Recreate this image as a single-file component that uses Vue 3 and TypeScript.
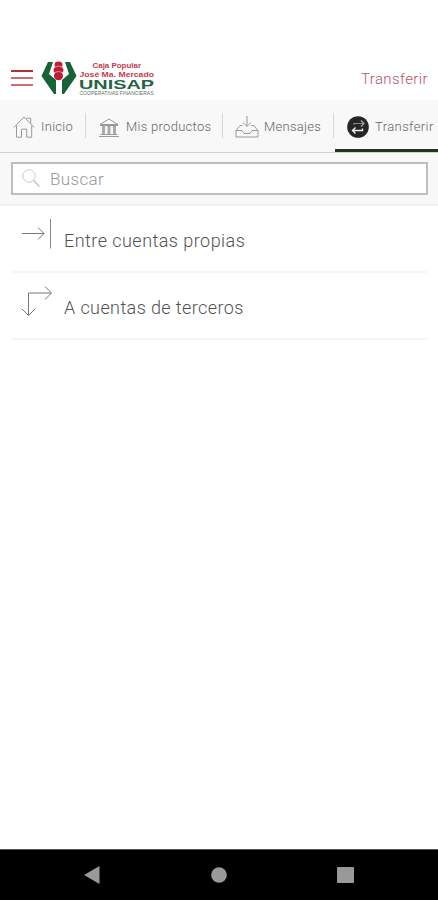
<script setup lang="ts">
import { ref } from 'vue'

interface Tab {
  id: string
  label: string
}

const tabs: Tab[] = [
  { id: 'inicio', label: 'Inicio' },
  { id: 'productos', label: 'Mis productos' },
  { id: 'mensajes', label: 'Mensajes' },
  { id: 'transferir', label: 'Transferir' },
]
const active = ref('transferir')
const query = ref('')
</script>

<template>
  <div class="screen">
    <header class="header">
      <button class="menu" aria-label="Menú"><i></i><i></i><i></i></button>
      <svg class="logo" width="116" height="42" viewBox="0 0 116 42">
        <path d="M7 4h5L8 16l7 6v14h-2L.5 18z" fill="#176336" />
        <path d="M29 4h-5l4 12-7 6v14h2l12.500-18z" fill="#176336" />
        <ellipse cx="17.500" cy="6.800" rx="4" ry="3.300" fill="#bd1e37" />
        <ellipse cx="17.500" cy="12" rx="5" ry="3.800" fill="#bd1e37" />
        <ellipse cx="17.500" cy="18" rx="4.600" ry="4.200" fill="#bd1e37" />
        <path d="M14 9q3.500-2 7 0M13.500 14.500q4-2 8 0" stroke="#e9a4ad" stroke-width=".8" fill="none" />
        <text class="brand red" x="51.500" y="9.700" font-size="7" textLength="48.500" lengthAdjust="spacingAndGlyphs">Caja Popular</text>
        <text class="brand red" x="38.500" y="18.500" font-size="7.500" textLength="74.500" lengthAdjust="spacingAndGlyphs">José Ma. Mercado</text>
        <text class="brand green" x="38" y="30.500" font-size="12.500" textLength="75" lengthAdjust="spacingAndGlyphs">UNISAP</text>
        <text class="brand small" x="38.500" y="37" font-size="5.500" textLength="74" lengthAdjust="spacingAndGlyphs">COOPERATIVAS FINANCIERAS</text>
      </svg>
      <span class="title">Transferir</span>
    </header>

    <nav class="tabs">
      <button
        v-for="tab in tabs"
        :key="tab.id"
        class="tab"
        :class="[tab.id, { active: active === tab.id }]"
        @click="active = tab.id"
      >
        <svg v-if="tab.id === 'inicio'" class="line" width="22" height="22" viewBox="0 0 22 22">
          <path d="M.8 11.500 11 1l10.200 10.500M3.500 9.500v11.700h5v-8h5.200v8h5V9.500M13.500 2.200h4.200v5.500" />
        </svg>
        <svg v-else-if="tab.id === 'productos'" class="line" width="22" height="22" viewBox="0 0 22 22">
          <path d="M2 8.500 11 3l9 5.500zM2 9.500h18M2.500 18.500h17M1 20.500h20" />
          <path class="columns" d="M5.500 10v8.500M11 10v8.500M16.500 10v8.500" />
        </svg>
        <svg v-else-if="tab.id === 'mensajes'" class="line" width="24" height="22" viewBox="0 0 24 22">
          <path d="M12 0v10M8 6.500l4 4 4-4M7.500 9.500H5l-4 5V21h22v-6.500l-4-5h-2.500M1 14.500h6l2 3h6l2-3h6" />
        </svg>
        <svg v-else width="22" height="22" viewBox="0 0 22 22">
          <circle cx="11" cy="11" r="10.800" fill="#252525" />
          <path d="M7 9V7.500h9.500" fill="none" stroke="#888" stroke-width="1.200" />
          <path d="M14 4.500l3 3-3 3" fill="none" stroke="#aaa" stroke-width="1.200" />
          <path d="M15.500 12.500v2H5.500M8.500 11.500l-3 3 3 3" fill="none" stroke="#eee" stroke-width="1.400" />
        </svg>
        <span>{{ tab.label }}</span>
      </button>
    </nav>

    <section class="search">
      <label class="field">
        <svg width="20" height="20" viewBox="0 0 20 20">
          <path d="M11.500 11.500l6 6" stroke="#bfc1c2" stroke-width="1.400" />
          <circle cx="7" cy="7" r="6.200" fill="none" stroke="#c8cacb" />
        </svg>
        <input v-model="query" type="text" placeholder="Buscar" />
      </label>
    </section>

    <main class="list">
      <a class="row own">
        <svg width="32" height="32" viewBox="0 0 32 32">
          <path d="M1 15.500h22M17 9.500l6 6-6 6" />
          <path class="bar" d="M29.500 1v29.500" />
        </svg>
        <span>Entre cuentas propias</span>
      </a>
      <a class="row others">
        <svg width="32" height="32" viewBox="0 0 32 32">
          <path d="M7.500 30V8H30M24 1.500l6.500 6.500L24 14.500M1 24l6.500 6.500L14 24" />
        </svg>
        <span>A cuentas de terceros</span>
      </a>
    </main>

    <footer class="navbar">
      <svg width="16" height="18" viewBox="0 0 16 18"><path d="M0 9 15.500 0v18z" /></svg>
      <svg width="16" height="16" viewBox="0 0 16 16"><circle cx="8" cy="8" r="7.800" /></svg>
      <svg width="17" height="16" viewBox="0 0 17 16"><rect width="17" height="16" rx="1" /></svg>
    </footer>
  </div>
</template>

<style>
body {
  margin: 0;
  background: #fff;
}
</style>

<style scoped>
.screen {
  display: flex;
  flex-direction: column;
  box-sizing: border-box;
  width: 438px;
  height: 900px;
  padding-top: 56px;
  overflow: hidden;
  background: #fff;
  color: #505254;
  font-family: Roboto, "Liberation Sans", sans-serif;
  font-weight: 300;
}
button {
  border: 0;
  padding: 0;
  background: none;
  font: inherit;
  color: inherit;
}
.header {
  display: flex;
  box-sizing: border-box;
  height: 44px;
  padding: 2px 10px 0 11px;
}
.menu {
  display: flex;
  flex-direction: column;
  gap: 5px;
  width: 22px;
  height: 16px;
  margin: 12px 8px 0 0;
}
.menu i {
  flex: none;
  width: 22px;
  height: 2px;
  background: #cf6d73;
}
.menu i:first-child {
  background: #b62f38;
}
.logo {
  flex: none;
  overflow: visible;
}
.brand {
  font-family: "Liberation Sans", sans-serif;
  font-weight: 700;
}
.red {
  fill: #c63a50;
}
.green {
  fill: #246443;
}
.small {
  fill: #5d7267;
  font-weight: 400;
}
.title {
  margin: 12px 0 0 auto;
  color: #b65566;
  font-size: 15px;
  line-height: 18px;
  letter-spacing: 0.4px;
}
.tabs {
  display: flex;
  box-sizing: border-box;
  height: 53px;
  background: #f8f8f8;
  border-bottom: 1px solid #d1d1d1;
}
.tab {
  position: relative;
  display: flex;
  flex: none;
  align-items: center;
  box-sizing: border-box;
  height: 53px;
  font-size: 13px;
  letter-spacing: 0.28px;
  white-space: nowrap;
  color: #666;
}
.tab svg {
  flex: none;
}
.inicio {
  width: 85px;
  padding-left: 13px;
  gap: 6px;
}
.productos {
  width: 137px;
  padding-left: 13px;
  gap: 6px;
}
.mensajes {
  width: 111px;
  padding-left: 13px;
  gap: 5px;
}
.transferir {
  width: 105px;
  padding-left: 14px;
  gap: 6px;
  letter-spacing: 0.4px;
}
.tab + .tab::before {
  content: "";
  position: absolute;
  left: 0;
  top: 13px;
  width: 1px;
  height: 25px;
  background: #d8d8d8;
}
.tab.active::after {
  content: "";
  position: absolute;
  left: 2px;
  right: 0;
  bottom: 1px;
  height: 3px;
  background: #213522;
}
.line {
  fill: none;
  stroke: #999;
  stroke-width: 1;
}
.columns {
  stroke: #aaa;
  stroke-width: 3;
}
.search {
  box-sizing: border-box;
  height: 53px;
  padding: 9px 10px 0 11px;
  background: #f8f8f8;
  border-bottom: 2px solid #f0f0f0;
}
.field {
  display: flex;
  align-items: center;
  box-sizing: border-box;
  height: 33px;
  padding-left: 9px;
  gap: 8px;
  background: #fff;
  border: 2px solid #bdbebf;
}
.field input {
  flex: 1;
  min-width: 0;
  padding: 0;
  border: 0;
  outline: 0;
  background: none;
  font: inherit;
  font-size: 17px;
  letter-spacing: 0.35px;
}
.field input::placeholder {
  color: #92999e;
  opacity: 1;
}
.list {
  flex: 1;
  padding: 0 11px 0 12px;
}
.row {
  display: flex;
  align-items: flex-start;
  box-sizing: border-box;
  height: 67px;
  padding: 12px 0 0 9px;
  gap: 11px;
  border-bottom: 2px solid #f5f5f5;
  font-size: 18px;
  letter-spacing: 0.46px;
}
.others {
  letter-spacing: 0.4px;
}
.row svg {
  flex: none;
  fill: none;
  stroke: #777;
  stroke-width: 1;
}
.row .bar {
  stroke: #888;
}
.row span {
  margin-top: 11px;
  line-height: 24px;
}
.navbar {
  display: flex;
  justify-content: space-between;
  align-items: center;
  box-sizing: border-box;
  height: 51px;
  padding: 0 84px;
  background: #000;
  border-top: 1px solid #555;
}
.navbar svg {
  fill: #999;
}
</style>
